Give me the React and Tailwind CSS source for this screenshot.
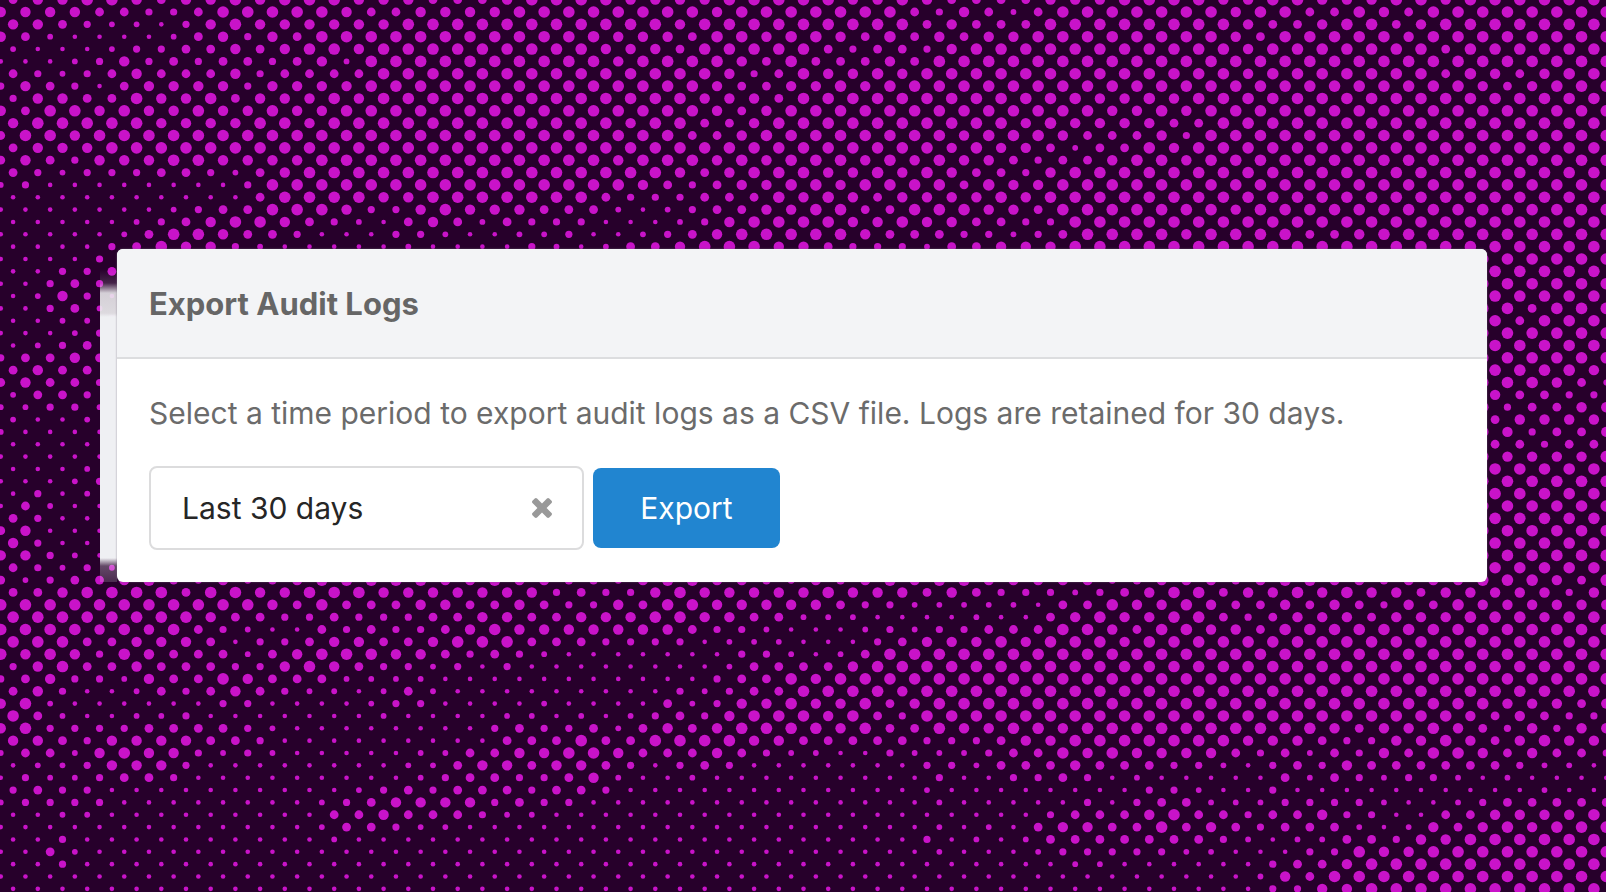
import React, { useState } from 'react'

// Halftone rows. Each digit is one dot size, rows are padded with the largest dot.
// Rows with "_" run behind the card: left part, gap, right part.
const HALFTONE_ROWS = [
  '4556654556566655544456 666555566666556544445 5566665566555665666666',
  '5555443346666654455556 6666666566666664354246 6666665664465466666666',
  '5543221356555555666666 666665666666666454446 6666666544566456666666',
  '5421111245354666666666 6665554665665464545566 6666665466666566666666',
  '2111233445456656666666 665554666664344356666 6666666566666664666666',
  '1112353434434526666666 6665666654644454666666',
  '4323454445344446666666 666666653465565666666 6666666566666664654566',
  '3543145555355556666666 6666666544556566666666 6666666666666666545666',
  '3554465564555656666666 666666555466666666666 6556566666666666666666',
  '5466565565565566666666 6666666545666666666666 6556566666666666666666',
  '5666665555665666666666 666566445666666666656 5555446666666666666666',
  '4665666666666666666666 6666664456666666656665 4445366666666666666666',
  '4555666666666666666666 666666666666666656554 2446566666666666666666',
  '4543555665555666666666 6665666565666565655434 4566566666666666666666',
  '4323334432456666666666 666665456665565654435',
  '2311111111366666666666 6666543455665666646556',
  '1111111111466665566666 664333444656545555656',
  '1111111234466653356555 4442123445566446665546 6666665666666666666666',
  '1111123456654321454243 331112356666556554433',
  '1111124665443111332112 2311234566666544433234 6666566664456666666666',
  '1111346553211111211113 212445666554333244555',
  '11113_66666',
  '11334_66666',
  '11343_66666',
  '12531_66666',
  '11342_64666',
  '1122_64666',
  '11123_66666',
  '1234_66666',
  '34454_66666',
  '4544_66665',
  '45443_66542',
  '2443_54433',
  '22332_34455',
  '2112_45555',
  '21111_53445',
  '1111_44344',
  '11111_55556',
  '1112_66666',
  '11123_66666',
  '1312_66666',
  '14211_66666',
  '4311_66666',
  '45111_66666',
  '5311_66666',
  '55321_66666',
  '43232_66666',
  '4234456435345666665565 5443566554354565665555 5345554566554555666546',
  '4456666466556665555555 343356555556555454333 2345664556565545555535',
  '6666666666654644455445 4335466555554332222214 4655654454543546555555',
  '6666666654433433344554 455566554422211112114 5655664345554555666566',
  '6666565643211434334565 5555554332111232334446 6546655466666666666666',
  '6664455541334554456664 443333122211134555656 6656666666666666666666',
  '6565365444245666554343 2111111133212466666666',
  '3564454443356543323131 111111124444566666666',
  '3453325446544422221111 1111111344656666666666',
  '4531124345432212421111 111113234466665666666',
  '5621111113311112331111 2111142355655645666666 6666666666666666655545',
  '6421122311111112111122 121234356665643666666 6666666666666666545433',
  '5633334444321111111134 3342454566665644655665 6666666666545565435355',
  '5543555544311111111144 464466665544444333455 6666666555433556545655',
  '2442565532321111122445 5665444543221132223446 5655554342435466545443',
  '1223555311111111224554 554313431111111332444 5444332134354444443221',
  '1322344311111111123443 3452112111111111311334 3121111142432332121111',
  '3433111111111123434443 443111111111111211111 1113321131111111111211',
  '2333311111111234555534 3311111111111111211111 3134422233332112344444',
  '1122111111111445444322 111111111111111111113 4445644344533114455556',
  '1111111111111244322111 1111111111111111212145 5446454344421254565666',
  '1131111111111211111111 111111111111111312124 4444443212244355666666',
  '1142111111111111111111 1111111111111111211123 3333221113365566666666',
  '1131111111111111111111 111111111111111111111 2211111134456666666666',
  '1111111111111111111111 1111111111111111111111 1111111254666666666666',
  '1111111111111111111111 111111111111111111111 1111111133556666666666',
]

const DOT_RADII = [0, 2.3, 2.9, 3.6, 4.4, 5.2, 5.8]
const DOT_STEP = 12.35

const HALFTONE_DOTS = HALFTONE_ROWS.flatMap((row, y) => {
  const odd = y % 2 === 1
  const count = odd ? 66 : 65
  const [left, right = ''] = row.replaceAll(' ', '').split('_')
  const sizes = left.padEnd(count - right.length, '6') + right
  return [...sizes].map((size, x) => ({
    key: `${y}-${x}`,
    cx: (0.75 + (2 * x + (odd ? 0 : 1)) * DOT_STEP).toFixed(2),
    cy: (y * DOT_STEP - 0.35).toFixed(2),
    r: DOT_RADII[Number(size)],
  }))
})

const HalftoneBackground = () => (
  <svg
    className="absolute inset-0 h-full w-full"
    viewBox="0 0 1606 892"
    preserveAspectRatio="xMidYMid slice"
    fill="#c913c9"
    aria-hidden="true"
  >
    {HALFTONE_DOTS.map(({ key, ...dot }) => (
      <circle key={key} {...dot} />
    ))}
  </svg>
)

const ClearIcon = () => (
  <svg className="h-5 w-5" viewBox="302 366 1188 1188" fill="currentColor" aria-hidden="true">
    <path d="M1490 1322q0 40-28 68l-136 136q-28 28-68 28t-68-28l-294-294-294 294q-28 28-68 28t-68-28l-136-136q-28-28-28-68t28-68l294-294-294-294q-28-28-28-68t28-68l136-136q28-28 68-28t68 28l294 294 294-294q28-28 68-28t68 28l136 136q28 28 28 68t-28 68l-294 294 294 294q28 28 28 68z" />
  </svg>
)

const PERIODS = [
  { value: '30', label: 'Last 30 days' },
  { value: '7', label: 'Last 7 days' },
  { value: '1', label: 'Last 24 hours' },
]

const ExportCard = () => {
  const [period, setPeriod] = useState('30')

  return (
    <section className="relative">
      {/* Edge of the panel behind the card, fading out at both ends */}
      <div className="absolute top-5 bottom-0 -left-[17px] w-[17px] bg-[linear-gradient(to_bottom,rgba(239,240,243,0)_0,rgba(239,240,243,0.15)_14px,rgba(236,236,238,0.88)_24px,rgba(236,236,238,0.92)_44px,#eff0f3_48px,#eff0f3_calc(100%-24px),rgba(239,240,243,0.3)_calc(100%-16px),rgba(239,240,243,0.18)_100%)]" />

      <div className="relative overflow-hidden rounded-md bg-white shadow-[0_0_2px_rgba(120,110,130,0.8)]">
        <header className="border-b-2 border-[#dcdddf] bg-[#f3f4f6] px-8 pt-[35px] pb-[33px]">
          <h1 className="text-[31px] leading-10 font-bold text-[#666666]">Export Audit Logs</h1>
        </header>

        <div className="px-8 pt-[34px] pb-8 text-[30px] leading-10">
          <p className="text-[#6b6b6b]">
            Select a time period to export audit logs as a CSV file. Logs are retained for 30 days.
          </p>
          <form
            className="mt-[33px] flex flex-wrap items-center gap-[9px]"
            onSubmit={(e) => e.preventDefault()}
          >
            <div className="flex h-[84px] w-[435px] items-center rounded-lg border-2 border-[#dcdcdd] bg-white pr-[30px] pl-[31px]">
              <select
                aria-label="Time period"
                className="min-w-0 flex-1 appearance-none bg-transparent text-[#262626] outline-none"
                value={period}
                onChange={(e) => setPeriod(e.target.value)}
              >
                <option value="">Select period</option>
                {PERIODS.map((p) => (
                  <option key={p.value} value={p.value}>{p.label}</option>
                ))}
              </select>
              <button type="button" aria-label="Clear" className="text-[#999999]" onClick={() => setPeriod('')}>
                <ClearIcon />
              </button>
            </div>
            <button type="submit" className="h-20 w-[187px] rounded-lg bg-[#2185d0] text-white">
              Export
            </button>
          </form>
        </div>
      </div>
    </section>
  )
}

const App = () => (
  <main className="relative min-h-screen overflow-hidden bg-[#27002b] pt-[249px] pr-[119px] pb-20 pl-[117px] font-[Inter,sans-serif]">
    <HalftoneBackground />
    <ExportCard />
  </main>
)

export default App
